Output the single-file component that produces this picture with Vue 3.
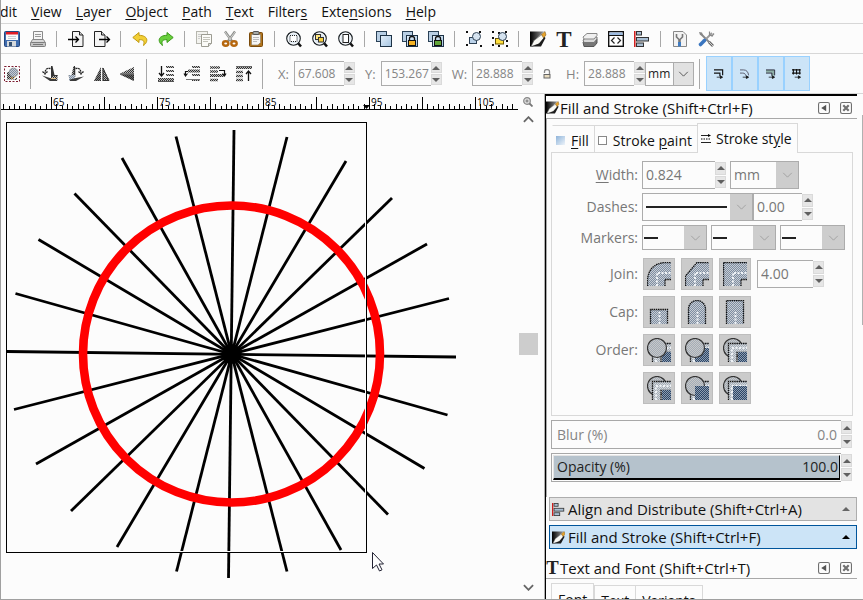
<script setup>
import { h, ref } from 'vue'

const Spin = (props) =>
  h('span', { class: 'spin' }, [
    h('button', { type: 'button', 'aria-label': props.name + ' up' }, [
      h('svg', { viewBox: '0 0 8 4' }, [h('path', { d: 'M0 4L4 0L8 4Z' })]),
    ]),
    h('button', { type: 'button', 'aria-label': props.name + ' down' }, [
      h('svg', { viewBox: '0 0 8 4' }, [h('path', { d: 'M0 0L4 4L8 0Z' })]),
    ]),
  ])
Spin.props = ['name']

const menus = [
  ['', '', 'dit'],
  ['', 'V', 'iew'],
  ['', 'L', 'ayer'],
  ['', 'O', 'bject'],
  ['', 'P', 'ath'],
  ['', 'T', 'ext'],
  ['Filter', 's', ''],
  ['Exte', 'n', 'sions'],
  ['', 'H', 'elp'],
]

const page = (x) =>
  `<path d="M${x + 0.5} .5h7l3.500 3.500v11.500h-10.500z" fill="#f4f4f4" stroke="#222"/><path d="M${x + 7.5} .5v3.500h3.500" fill="#ccc" stroke="#222"/>`
const lens =
  '<path d="M11.500 11.500L15 15.500" stroke="#111" stroke-width="2.500"/><circle cx="7.500" cy="7.500" r="6.700" fill="#dce6ef" stroke="#1c2226" stroke-width="1.300"/><circle cx="7.500" cy="7.500" r="5.500" fill="none" stroke="#fff"/>'
const twoSquares =
  '<rect x=".5" y=".5" width="10" height="10" fill="#b9cfe4" stroke="#2a4156"/><rect x="4.500" y="4.500" width="11" height="11" fill="url(#gBlue)" stroke="#1d3245"/>'
const lock = (c) =>
  `<path d="M7.500 9.500v-2a2.500 2 0 0 1 5 0v2" fill="none" stroke="#111" stroke-width="1.300"/><rect x="6.500" y="9.500" width="7" height="5" fill="${c}" stroke="#111"/>`
const corners =
  '<path d="M0 0h2v2h-2zM13 0h2v2h-2zM0 13h2v2h-2zM14 14h2v2h-2z" fill="#111"/>'
const pen =
  '<path d="M0 .5H14L4 10 2.500 15.500H0z" fill="url(#gInk)"/><path d="M1 15.500L4 9.500 12 3.500l2.500 3L9 13z" fill="#fafaf6" stroke="#555" stroke-width=".6"/><path d="M11.500 3.500L15 .5l1 3.500-2.500 3z" fill="#e8a42c" stroke="#6b4a10" stroke-width=".5"/><path d="M1.500 15.500L9 12.500 14.500 6l1 1L11 15.500z" fill="#1c1c1c"/>'
const barsH = (ys) => ys.map((y) => `<path d="M8 ${y}h8" stroke="url(#dk)" stroke-width="2"/>`).join('')

const icons = {
  save: '<rect x=".5" y=".5" width="15" height="15" rx="1" fill="#3f6cae" stroke="#24477f"/><rect x="2" y="1" width="12" height="8" fill="#fafafa"/><path d="M2 1h12v2.500h-12z" fill="#e01b24"/><path d="M4 5.500h8M4 7.500h8" stroke="#c9ccd0"/><rect x="3" y="10" width="9" height="5.500" fill="#d5d9dc"/><rect x="5" y="11" width="3" height="4" fill="#35506f"/>',
  print: '<path d="M3.500 8.500V.5h9v8" fill="#f6f6f6" stroke="#8a8a8a"/><path d="M5 3.500h6M5 5.500h6" stroke="#999"/><path d="M2.500 8.500h11l2 3.500h-15z" fill="#d8d8d8" stroke="#888"/><rect x=".5" y="11.500" width="15" height="4" rx="1" fill="#c4c4c4" stroke="#7d7d7d"/><path d="M3 13.500h10" stroke="#777"/>',
  import: page(4) + '<path d="M0 8.500h10M7.500 5.500l3 3-3 3" fill="none" stroke="#000" stroke-width="1.300"/>',
  export: page(0) + '<path d="M5 8.500h10M12.500 5.500l3 3-3 3" fill="none" stroke="#000" stroke-width="1.300"/>',
  undo: '<path d="M7 1.500L.8 6.500 7 11.500V8.700c4-.2 6 1 4.500 5.800C16.500 11 16.500 4.500 7 4.300z" fill="#f2cf35" stroke="#c09a12" stroke-linejoin="round"/>',
  redo: '<path d="M9 1.500l6.200 5L9 11.500V8.700c-4-.2-6 1-4.500 5.800C-.5 11-.5 4.500 9 4.300z" fill="#68cf3c" stroke="#3d9a1b" stroke-linejoin="round"/>',
  copy: '<rect x=".5" y=".5" width="11" height="12" fill="#f3f3ef" stroke="#b6b6ae"/><path d="M2 3.500h7M2 5.500h3M2 7.500h2" stroke="#ccc"/><path d="M5.500 3.500h10v9l-3 3h-7z" fill="#fbfbf8" stroke="#9c9c92"/><path d="M7 6.500h7M7 8.500h7M7 10.500h5" stroke="#c3c3ba"/><path d="M12.500 15.500v-3h3" fill="#ddd" stroke="#9c9c92"/>',
  cut: '<path d="M3 .5L10.500 11" stroke="#8b8d8a" stroke-width="2.400"/><path d="M13 .5L5.500 11" stroke="#8b8d8a" stroke-width="2.400"/><path d="M3 1l6 8M13 1l-6 8" stroke="#e6e6e4" stroke-width=".8"/><ellipse cx="3.700" cy="12.500" rx="2.700" ry="2.200" fill="none" stroke="#b5670f" stroke-width="2.400"/><ellipse cx="12" cy="12.500" rx="2.700" ry="2.200" fill="none" stroke="#b5670f" stroke-width="2.400"/>',
  paste: '<rect x="1.500" y="1.500" width="13" height="14" rx="1" fill="#b0741d" stroke="#7a4a0a"/><path d="M3.500 3.500h9v8l-2.500 2.500h-6.500z" fill="#f6f6f4" stroke="#8a7b60" stroke-width=".6"/><path d="M5 6.500h6M5 8.500h6M5 10.500h4" stroke="#bbb"/><rect x="5" y=".5" width="6" height="3" rx="1" fill="#a8aaa5" stroke="#555"/>',
  zoomSel: lens + '<rect x="4" y="4.500" width="7" height="6" fill="#fff" stroke="#222" stroke-dasharray="1 1"/>',
  zoomDraw: lens + '<rect x="3.500" y="3.500" width="5" height="5" fill="#ffe680" stroke="#333"/><rect x="6.500" y="6.500" width="5" height="4.500" fill="#f7cf3d" stroke="#333"/>',
  zoomPage: lens + '<rect x="5" y="3.500" width="5.500" height="8" fill="#fff" stroke="#222"/>',
  dup: twoSquares,
  clone: twoSquares + lock('#f5b324'),
  unclone: twoSquares + lock('#62a63a'),
  group: corners + '<rect x="3.500" y="6.500" width="7" height="6" fill="#bcd3ea" stroke="#2d4053"/><circle cx="10.500" cy="5.500" r="4" fill="#d5e3f0" stroke="#2d4053"/>',
  ungroup: corners + '<path d="M6 1h2v2h-2zM0 6h2v2h-2zM6 14h2v2h-2zM14 9h2v2h-2z" fill="#111"/><rect x="3.500" y="7.500" width="8" height="5.500" fill="#ffdf3e" stroke="#6b5600"/><circle cx="10.500" cy="5.500" r="4" fill="#d5e3f0" stroke="#2d4053"/>',
  fill: pen,
  text: '<text x="8" y="15.500" text-anchor="middle" font-family="Liberation Serif, serif" font-weight="700" font-size="23" fill="#222">T</text>',
  layers: '<path d="M1 11l4-3h10v4l-3 3.500h-10z" fill="#777" stroke="#555"/><path d="M1 9l4-3h10v2l-3 3.500H2z" fill="#d8d8d8" stroke="#777"/><path d="M1 6l4-3.500h10v2L12 8H2z" fill="#f0f0f0" stroke="#888"/>',
  xml: '<rect x=".7" y=".7" width="14.600" height="14.600" fill="#fff" stroke="#111" stroke-width="1.400"/><path d="M1.500 1.500h13v2.500h-13z" fill="#9dbbe0"/><path d="M1 4.500h14" stroke="#111"/><path d="M6.500 6.500l-3 3 3 3M9.500 6.500l3 3-3 3" fill="none" stroke="#222" stroke-width="1.200"/>',
  align: '<path d="M.8 0v16" stroke="#d01616" stroke-width="1.500"/><rect x="2.500" y=".5" width="5" height="3.500" fill="#a9bfd4" stroke="#333"/><rect x="2.500" y="6.500" width="12" height="3.500" fill="#a9bfd4" stroke="#333"/><rect x="2.500" y="12" width="7" height="3.500" fill="#a9bfd4" stroke="#333"/>',
  prefs: '<path d="M1.500.5h9.500l3.500 3.500v11.500h-13z" fill="#f2f2f2" stroke="#888"/><path d="M4.500 3v3l2.500 2.500v4M10.500 3v3L8 8.500v4" fill="none" stroke="#777" stroke-width="1.600"/><path d="M7.500 11v4.500" stroke="#3f7bc0" stroke-width="3"/>',
  tools: '<path d="M3 3l11 11" stroke="#888" stroke-width="2"/><path d="M1 1l3 .5 1 3-3-.5z" fill="#888"/><path d="M14 2L7.500 8.500" stroke="#999" stroke-width="1.800"/><path d="M11.500 .5v3.500l3.500 1M16 2.500l-2.500 3" fill="none" stroke="#888" stroke-width="1.200"/><path d="M6.500 9.500L2.500 13.500" stroke="#3a75bf" stroke-width="3.600" stroke-linecap="round"/><path d="M11 11l4 4" stroke="#666" stroke-width="2.600"/><path d="M11 11l4 4" stroke="#eee" stroke-width=".8"/>',
  selAll: '<rect x=".5" y=".5" width="15" height="15" fill="none" stroke="#7c1c30" stroke-dasharray="2 1.500"/><path d="M3 6h7v7H3z" fill="url(#dk)"/><circle cx="9.500" cy="6.500" r="4.500" fill="url(#bl)" stroke="#888" stroke-width=".6"/><path d="M2 13.500h8l3-2v2.500H2z" fill="url(#dk)"/><path d="M7 12h2M10 11h1" stroke="#d8a040"/>',
  rotL: '<path d="M9 0h1.500l2 9h3.500l-2 3.500H9z" fill="#333"/><path d="M10 10h5.500v5H9z" fill="url(#dk)"/><path d="M8.500 2.500C4.500 1.500 3 4 3 7.500M.5 5.500L3 8l2.500-2.500" fill="none" stroke="#222" stroke-width="1.300" stroke-dasharray="2 .6"/><path d="M0 9.500l8 2.500 6 1.500v1.500H8z" fill="#3a3a3a"/><path d="M9 12.500h5" stroke="#e2c28c"/>',
  rotR: '<path d="M7 0H5.500l-2 9H0l2 3.500h5z" fill="url(#dk)"/><path d="M6.500 1v10" stroke="#333" stroke-width="1.500"/><path d="M1 9h6v6H1z" fill="url(#bl)"/><path d="M7.500 2.500C11.500 1.500 13 4 13 7.500M10.500 5.500L13 8l2.500-2.500" fill="none" stroke="#222" stroke-width="1.300" stroke-dasharray="2 .6"/><path d="M16 10.500L8 12l-6 1.500V15h6z" fill="#3a3a3a"/>',
  flipH: '<path d="M7 1v14H0z" fill="url(#dk)"/><path d="M8.500 1v14H16z" fill="url(#dk)"/><path d="M9 2v12.500h5.500z" fill="none" stroke="#333"/><path d="M7 1v14H0z" fill="#222" opacity=".35"/>',
  flipV: '<path d="M14 1v6.500H0z" fill="url(#dk)"/><path d="M14 8.500V15L0 8.500z" fill="url(#dk)"/><path d="M14 8.500V15L0 8.500z" fill="#222" opacity=".55"/><path d="M0 8h14" stroke="#333"/>',
  bottom: '<path d="M3.500 0v10M1 7l2.500 3L6 7" fill="none" stroke="#111" stroke-width="1.300"/>' + barsH([1, 5, 9]) + '<path d="M0 13.500h16" stroke="url(#dk)" stroke-width="3"/><path d="M0 15.500h16" stroke="#555"/>',
  lower: '<path d="M6 5.500H1.500v4M0 7.500l1.500 2.500 2-2.500" fill="none" stroke="#111" stroke-width="1.200"/>' + barsH([1, 9, 14]) + '<path d="M4 5h12" stroke="url(#dk)" stroke-width="3"/><path d="M2 13.500h14" stroke="#777"/>',
  raise: '<path d="M0 1.500h10M0 5.500h8M0 14h8" stroke="url(#dk)" stroke-width="2.500"/><path d="M0 9.500h14" stroke="url(#dk)" stroke-width="3"/><path d="M9 4.500h5.500v5M12.500 7.500l2 2.500 1.500-2.500" fill="none" stroke="#111" stroke-width="1.200"/>',
  top: '<path d="M0 1.500h16" stroke="url(#dk)" stroke-width="3"/><path d="M0 .5h16" stroke="#666"/><path d="M0 6h7M0 10h7M0 14h7" stroke="url(#dk)" stroke-width="2.500"/><path d="M12.500 15V5.500M10 8l2.500-3L15 8" fill="none" stroke="#111" stroke-width="1.300"/>',
  snap1: '<path d="M0 1h9.500v6M0 4.500h6.500v3.500" fill="none" stroke="#111" stroke-width="1.300"/><path d="M3 9h5M7 7.500L9.500 9 7 10.500z" fill="#111" stroke="#111" stroke-width=".8"/>',
  snap2: '<path d="M0 1h4c3 0 5 2 5.500 6M0 4.500h3c2 0 3 1 3.500 3" fill="none" stroke="#556" stroke-width="1"/><path d="M3 9h5M7 7.500L9.500 9 7 10.500z" fill="#111" stroke="#111" stroke-width=".8"/>',
  snap3: '<path d="M0 1h9v6.500H6v-3.500H0z" fill="#8fb0a8"/><path d="M0 1h9.500v6M0 4.500h6.500v3" fill="none" stroke="#223" stroke-width="1"/><path d="M3 9h5M7 7.500L9.500 9 7 10.500z" fill="#111" stroke="#111" stroke-width=".8"/>',
  snap4: '<path d="M0 1h9.500M0 4.500h9.500" stroke="#111" stroke-width="1.300"/><path d="M1.500 0v6M5 0v6M8.500 0v6" stroke="#111" stroke-width="1.200"/><path d="M3 9h5M7 7.500L9.500 9 7 10.500z" fill="#111" stroke="#111" stroke-width=".8"/>',
}

const commands = [
  ['save', 'print'], ['import', 'export'], ['undo', 'redo'], ['copy', 'cut', 'paste'],
  ['zoomSel', 'zoomDraw', 'zoomPage'], ['dup', 'clone', 'unclone'], ['group', 'ungroup'],
  ['fill', 'text', 'layers', 'xml', 'align'], ['prefs', 'tools'],
]
const transforms = [['selAll'], ['rotL', 'rotR', 'flipH', 'flipV'], ['bottom', 'lower', 'raise', 'top']]
const snaps = ['snap1', 'snap2', 'snap3', 'snap4']

const coords = ref([
  { id: 'X', value: '67.608' },
  { id: 'Y', value: '153.267' },
  { id: 'W', value: '28.888' },
])

// Ruler: one tick per unit, 5.3px apart, a tall one every fifth pair
const ticks = Array.from({ length: 97 }, (_, i) => ({
  x: Math.round(51 + (i - 9) * 5.3) - 0.5,
  top: (i - 9) % 10 === 0 ? 1 : i % 2 ? 10 : 8,
})).filter((t) => t.x > 1 && t.x < 519)
const marks = [65, 75, 85, 95, 105].map((n, i) => ({ n, x: 52 + i * 106 }))

const spokes = [
  [234, 130, 228.5, 578], [287, 137, 176.5, 571.5], [346, 161, 117, 547], [392, 198, 71, 511],
  [427, 244, 36, 464], [449, 298.5, 14, 409.5], [456, 357, 7, 351.5], [447.5, 415, 15.5, 293.5],
  [424.5, 468.5, 38.5, 239.5], [388, 514.5, 74.5, 193.5], [341, 550, 122, 158], [287, 571.5, 176, 136.5],
]

const dots = (d) => `<path d="${d}" fill="none" stroke="#111" stroke-width="1.300" stroke-dasharray="1.500 .7"/>`
const mid = (d) => `<path d="${d}" fill="none" stroke="#eef2f6" stroke-width="2" stroke-dasharray="2 1.500"/>`
const joins = [
  '<path d="M0 24V19Q2 2 18 0H24V17H18V24z" fill="url(#bl)"/>' + dots('M.5 24V19Q1 2 18 .5H24M18 24V17.500H24') + mid('M10 24V11H24'),
  '<path d="M0 24V14L12 0H24V17H18V24z" fill="url(#bl)"/>' + dots('M.5 24V14L12 .5H24M18 24V17.500H24') + mid('M10 24V11H24'),
  '<path d="M0 24V0H24V17H18V24z" fill="url(#bl)"/>' + dots('M.5 24V.5H24M18 24V17.500H24') + mid('M10 24V11H24'),
]
const caps = [
  '<path d="M3 24V10H21V24z" fill="url(#bl)"/>' + dots('M3.500 24V9.500H20.500V24') + mid('M12.500 24V12'),
  '<path d="M3 24V9a9 9 0 0 1 18 0V24z" fill="url(#bl)"/>' + dots('M3.500 24V9a8.500 8.500 0 0 1 17 0V24') + mid('M12.500 24V12'),
  '<path d="M3 24V0H21V24z" fill="url(#bl)"/>' + dots('M3.500 24V.5H20.500V24') + mid('M12.500 24V12'),
]
const disc = '<circle cx="10" cy="10" r="9.500" fill="#c8c8c8"/><circle cx="10" cy="10" r="9.500" fill="url(#lt)" stroke="#333" stroke-width="1.200"/>'
const stroke = '<path d="M5 24V5H24V14H14V24z" fill="#d4d8dc"/><path d="M5 24V5H24V14H14V24z" fill="url(#lt)"/>' + mid('M9 24V10H24') + dots('M5.500 24V5.500H24M14 24V14.500H24')
const body = '<path d="M10 10H24V24H10z" fill="#8d9db0"/><path d="M10 10H24V24H10z" fill="url(#nv)"/>'
const inner = '<path d="M15 14H24V24H15z" fill="#8d9db0"/><path d="M15 14H24V24H15z" fill="url(#nv)"/>'
const orders = [
  [stroke + inner + disc, stroke + body + disc, disc + stroke + inner],
  [disc + stroke + inner, stroke + disc + body, disc + stroke + body],
]
const strokeRows = [
  { label: 'Join:', items: joins, miter: true },
  { label: 'Cap:', items: caps },
  { label: 'Order:', items: orders[0] },
  { label: '', items: orders[1] },
]
const chevron = 'M1 1L6 6L11 1'
</script>

<template>
  <div class="app">
    <svg class="defs" width="0" height="0" aria-hidden="true">
      <defs>
        <linearGradient id="gBlue" x2="1" y2="1"><stop stop-color="#e6f1fb" /><stop offset="1" stop-color="#a3c3e0" /></linearGradient>
        <linearGradient id="gInk" x2="1"><stop stop-color="#000" /><stop offset="1" stop-color="#999" /></linearGradient>
        <linearGradient id="gSky" x2="1" y2="1"><stop stop-color="#8fb4da" /><stop offset="1" stop-color="#eef4fa" /></linearGradient>
        <pattern id="dk" width="2" height="2" patternUnits="userSpaceOnUse"><rect width="2" height="2" fill="#bbb" /><path d="M0 0h1v1h-1zM1 1h1v1h-1z" fill="#333" /></pattern>
        <pattern id="bl" width="2" height="2" patternUnits="userSpaceOnUse"><rect width="2" height="2" fill="#c8cdd4" /><path d="M0 0h1v1h-1zM1 1h1v1h-1z" fill="#7e8ea2" /></pattern>
        <pattern id="lt" width="2" height="2" patternUnits="userSpaceOnUse"><path d="M0 0h1v1h-1zM1 1h1v1h-1z" fill="#a3adb8" /></pattern>
        <pattern id="nv" width="2" height="2" patternUnits="userSpaceOnUse"><path d="M0 0h1v1h-1zM1 1h1v1h-1z" fill="#2c4566" /></pattern>
      </defs>
    </svg>

    <nav class="menubar">
      <a v-for="m in menus" :key="m.join('')" href="#">{{ m[0] }}<u>{{ m[1] }}</u>{{ m[2] }}</a>
    </nav>

    <div class="bar commands">
      <div v-for="(g, i) in commands" :key="i" class="group">
        <button v-for="n in g" :key="n" type="button" :aria-label="n">
          <svg class="ico" viewBox="0 0 16 16" v-html="icons[n]"></svg>
        </button>
      </div>
    </div>

    <div class="bar controls">
      <div v-for="(g, i) in transforms" :key="i" class="group">
        <button v-for="n in g" :key="n" type="button" :aria-label="n">
          <svg class="ico" viewBox="0 0 16 16" v-html="icons[n]"></svg>
        </button>
      </div>
      <div class="fields">
        <div v-for="c in coords" :key="c.id" class="field">
          <label :for="'f' + c.id">{{ c.id }}:</label>
          <span class="entry"><input :id="'f' + c.id" v-model="c.value" type="text" /><Spin :name="c.id" /></span>
        </div>
        <button class="lock" type="button" aria-label="Lock">
          <svg viewBox="0 0 8 10"><path d="M1.500 4V2.500a2.500 2 0 0 1 5 0V5" fill="none" stroke="#888" stroke-width="1.300" /><rect x="1" y="5.500" width="6" height="3.500" fill="#e8dcc0" stroke="#666" /></svg>
        </button>
        <div class="field">
          <label for="fH">H:</label>
          <span class="entry"><input id="fH" type="text" value="28.888" /><Spin name="H" /></span>
          <span class="combo unit">
            <select aria-label="Unit"><option>mm</option></select>
            <span class="arrow"><svg viewBox="0 0 12 7"><path :d="chevron" /></svg></span>
          </span>
        </div>
      </div>
      <div class="snaps">
        <button v-for="s in snaps" :key="s" type="button" :aria-label="s"><svg viewBox="0 0 11 11" v-html="icons[s]"></svg></button>
      </div>
    </div>

    <main class="work">
      <section class="canvas">
        <svg class="ruler">
          <path d="M0 15.500H517" stroke="#000" />
          <path v-for="t in ticks" :key="t.x" :d="`M${t.x} ${t.top + 2}V15`" stroke="#000" />
          <path d="M362 11h7l-3.500 4z" />
          <text v-for="m in marks" :key="m.n" :x="m.x" y="12">{{ m.n }}</text>
        </svg>
        <button class="corner" type="button" aria-label="Zoom to window">
          <svg viewBox="0 0 10 10"><circle cx="4" cy="4" r="3.300" fill="#ddd" stroke="#888" stroke-width="1.200" /><path d="M6.500 6.500L9.500 9.500" stroke="#777" stroke-width="1.800" /><path d="M2.500 4h3M4 2.500v3" stroke="#777" /></svg>
        </button>
        <svg class="drawing">
          <g transform="translate(-1 -110)">
            <g stroke="#000" stroke-width="2.800">
              <line v-for="(s, i) in spokes" :key="i" :x1="s[0]" :y1="s[1]" :x2="s[2]" :y2="s[3]" />
            </g>
            <circle cx="231.500" cy="354" r="10" />
            <circle cx="231.500" cy="354" r="148.500" fill="none" stroke="#f00" stroke-width="8.600" />
            <path d="M365.500 123V551.500H7" fill="none" stroke="#fcfcfc" />
            <rect x="6.500" y="122.500" width="360" height="430" fill="none" stroke="#000" />
            <path d="M372.500 552.500v16l4-3.500 3 6 2.500-1.200-3-5.800h4.500z" fill="#fff" stroke="#223" />
          </g>
        </svg>
        <div class="scroll">
          <svg viewBox="0 0 12 7"><path d="M1 6L6 1L11 6" /></svg>
          <i></i>
          <svg viewBox="0 0 12 7"><path :d="chevron" /></svg>
        </div>
      </section>

      <aside class="dock">
        <header class="title">
          <svg viewBox="0 0 16 16" v-html="icons.fill"></svg>
          <h2>Fill and Stroke (Shift+Ctrl+F)</h2>
          <button type="button" aria-label="Iconify"><svg viewBox="0 0 11 11"><rect x=".5" y=".5" width="10" height="10" rx="1.500" /><path d="M7.500 2.500v6L3 5.500z" fill="#555" stroke="none" /></svg></button>
          <button type="button" aria-label="Close"><svg viewBox="0 0 11 11"><rect x=".5" y=".5" width="10" height="10" rx="1.500" /><path d="M3 3l5 5M8 3L3 8" stroke-width="2" /></svg></button>
        </header>

        <div class="inner">
          <div class="tabs">
            <button type="button"><svg viewBox="0 0 10 10"><rect width="9" height="9" fill="url(#gSky)" /></svg><span><u>F</u>ill</span></button>
            <button type="button"><svg viewBox="0 0 10 10"><rect x=".5" y=".5" width="8" height="8" fill="#fff" stroke="#888" /></svg><span>Stroke <u>p</u>aint</span></button>
            <button type="button" class="on"><svg viewBox="0 0 10 10"><path d="M0 1.500h8M0 8.500h10" stroke="#222" /><path d="M0 5h10" stroke="#555" stroke-width="1.500" stroke-dasharray="1.500 1" /><path d="M7 0l3 1.500-3 1.500z" /></svg><span>Stroke st<u>y</u>le</span></button>
          </div>
          <div class="panel">
            <div class="row">
              <label for="sw"><u>W</u>idth:</label>
              <span class="entry wide"><input id="sw" type="text" value="0.824" /><Spin name="Width" /></span>
              <span class="combo units">
                <select aria-label="Stroke unit"><option>mm</option></select>
                <span class="arrow"><svg viewBox="0 0 12 7"><path :d="chevron" /></svg></span>
              </span>
            </div>
            <div class="row">
              <label for="sd">Dashes:</label>
              <span class="combo dashes">
                <select id="sd"><option></option></select>
                <svg class="line" viewBox="0 0 80 2" preserveAspectRatio="none"><path d="M0 1H80" /></svg>
                <span class="arrow"><svg viewBox="0 0 12 7"><path :d="chevron" /></svg></span>
              </span>
              <span class="entry offset"><input aria-label="Dash offset" type="text" value="0.00" /><Spin name="Offset" /></span>
            </div>
            <div class="row markers">
              <label for="sm1">Markers:</label>
              <span v-for="n in 3" :key="n" class="combo marker">
                <select :id="'sm' + n" :aria-label="'Marker ' + n"><option></option></select>
                <svg class="line short" viewBox="0 0 14 2"><path d="M0 1H14" /></svg>
                <span class="arrow"><svg viewBox="0 0 12 7"><path :d="chevron" /></svg></span>
              </span>
            </div>
            <div v-for="(r, i) in strokeRows" :key="i" class="row shapes">
              <span class="lbl">{{ r.label }}</span>
              <button v-for="(s, j) in r.items" :key="j" type="button" :aria-label="(r.label || 'Order') + ' ' + (j + 1)">
                <svg viewBox="0 0 24 24" v-html="s"></svg>
              </button>
              <span v-if="r.miter" class="entry miter"><input aria-label="Miter limit" type="text" value="4.00" /><Spin name="Miter limit" /></span>
            </div>
          </div>

          <div class="scale">
            <div class="track"><label for="blur">Blur (%)</label><input id="blur" type="text" value="0.0" /></div>
            <Spin name="Blur" />
          </div>
          <div class="scale full">
            <div class="track"><div class="level"><label for="opac">Opacity (%)</label><input id="opac" type="text" value="100.0" /></div></div>
            <Spin name="Opacity" />
          </div>
        </div>

        <div class="switches">
          <button type="button">
            <svg viewBox="0 0 16 16" v-html="icons.align"></svg><span>Align and Distribute (Shift+Ctrl+A)</span>
            <svg class="tri" viewBox="0 0 8 4"><path d="M0 4L4 0L8 4Z" /></svg>
          </button>
          <button type="button" class="on">
            <svg viewBox="0 0 16 16" v-html="icons.fill"></svg><span>Fill and Stroke (Shift+Ctrl+F)</span>
            <svg class="tri" viewBox="0 0 8 4"><path d="M0 4L4 0L8 4Z" /></svg>
          </button>
        </div>

        <header class="title">
          <svg viewBox="0 0 16 16" v-html="icons.text"></svg>
          <h2>Text and Font (Shift+Ctrl+T)</h2>
          <button type="button" aria-label="Iconify"><svg viewBox="0 0 11 11"><rect x=".5" y=".5" width="10" height="10" rx="1.500" /><path d="M7.500 2.500v6L3 5.500z" fill="#555" stroke="none" /></svg></button>
          <button type="button" aria-label="Close"><svg viewBox="0 0 11 11"><rect x=".5" y=".5" width="10" height="10" rx="1.500" /><path d="M3 3l5 5M8 3L3 8" stroke-width="2" /></svg></button>
        </header>
        <div class="tabs second">
          <button type="button" class="on">Font</button>
          <button type="button">Text</button>
          <button type="button">Variants</button>
        </div>
      </aside>
      <div class="edge"></div>
    </main>
  </div>
</template>

<style>
body {
  margin: 0;
}
.spin {
  display: flex;
  flex: none;
  flex-direction: column;
  width: 11px;
  gap: 1px;
}
.spin button {
  display: flex;
  flex: 1;
  align-items: center;
  justify-content: center;
  min-height: 0;
  padding: 0;
  border: 1px solid #dadada;
  background: #e6e6e6;
}
.spin svg {
  width: 8px;
  height: 4px;
  fill: #606060;
}
</style>

<style scoped>
.app {
  display: flex;
  flex-direction: column;
  box-sizing: border-box;
  height: 100vh;
  overflow: hidden;
  border-left: 1px solid #a0a0a0;
  border-bottom: 1px solid #a0a0a0;
  background: #fcfcfc;
  color: #111;
  font: 14px/20px "Open Sans", sans-serif;
}
.defs {
  position: absolute;
}
button,
input,
select {
  box-sizing: border-box;
  margin: 0;
  padding: 0;
  border: 0;
  border-radius: 0;
  background: none;
  color: inherit;
  font: inherit;
}
button {
  display: flex;
  align-items: center;
}
select {
  appearance: none;
}
u {
  text-underline-offset: 2px;
}
.menubar {
  display: flex;
  flex: none;
  gap: 14px;
  height: 23px;
  margin-left: -1px;
  border-bottom: 1px solid #d7d7d7;
  line-height: 24px;
}
.menubar a {
  color: inherit;
  text-decoration: none;
}
.bar {
  display: flex;
  flex: none;
  align-items: center;
  margin-left: -2px;
  border-bottom: 1px solid #d7d7d7;
}
.commands {
  height: 29px;
}
.controls {
  height: 39px;
}
.group {
  display: flex;
  align-items: center;
}
.group button {
  justify-content: center;
  width: 26px;
  height: 26px;
}
.group + .group::before,
.fields::before,
.snaps::before {
  content: "";
  width: 1px;
  height: 16px;
  margin: 0 6px 0 5px;
  background: #a8a8a8;
}
.controls .group + .group::before,
.fields::before,
.snaps::before {
  height: 30px;
}
.ico {
  width: 16px;
  height: 16px;
  overflow: visible;
}
.fields {
  display: flex;
  align-items: center;
  gap: 10px;
  color: #858585;
  font-size: 13px;
}
.fields::before {
  margin-right: 5px;
}
.field {
  display: flex;
  align-items: center;
}
.field label {
  margin-right: 5px;
}
.entry {
  display: flex;
  align-items: center;
  height: 25px;
}
.entry input {
  align-self: stretch;
  width: 51px;
  padding-left: 3px;
  border: 1px solid #acacac;
  border-right: 0;
}
.field .entry input {
  width: 50px;
  font-size: 12px;
}
.entry .spin {
  align-self: stretch;
  margin: 1px 0;
}
.lock svg {
  width: 8px;
  height: 10px;
}
.lock + .field {
  margin-left: 5px;
}
.combo {
  display: grid;
  grid-template-columns: 1fr 20px;
  box-sizing: border-box;
  border: 1px solid #acacac;
}
.combo select {
  grid-area: 1 / 1 / 2 / 3;
  min-width: 0;
  padding-left: 3px;
}
.combo .arrow {
  display: flex;
  grid-area: 1 / 2;
  align-items: center;
  justify-content: center;
  background: #cdcdcd;
  pointer-events: none;
}
.arrow svg {
  width: 11px;
  height: 6px;
  fill: none;
  stroke: #9d9d9d;
}
.unit {
  width: 49px;
  height: 24px;
  color: #222;
  font-size: 12px;
}
.unit select {
  padding-left: 2px;
}
.unit .arrow {
  border-left: 1px solid #acacac;
  background: #e1e1e1;
}
.unit .arrow svg {
  stroke: #444;
}
.snaps {
  display: flex;
  align-items: center;
}
.snaps button {
  justify-content: center;
  width: 26px;
  height: 35px;
  border: 1px solid #99d1ff;
  background: #cce4f7;
}
.snaps svg {
  width: 10px;
  height: 10px;
}
.work {
  display: flex;
  flex: 1;
  min-height: 0;
}
.canvas {
  display: grid;
  flex: 1;
  grid-template: 16px 1fr / 1fr 32px;
  min-width: 0;
  border-right: 1px solid #b0b0b0;
}
.ruler {
  width: 100%;
  height: 16px;
  overflow: visible;
  font-size: 10px;
}
.corner {
  justify-content: center;
}
.corner svg {
  width: 10px;
  height: 10px;
}
.drawing {
  width: 100%;
  height: 100%;
  overflow: hidden;
}
.scroll {
  display: flex;
  flex-direction: column;
  align-items: center;
  justify-content: space-between;
  padding: 6px 0 8px;
}
.scroll svg {
  width: 11px;
  height: 7px;
  fill: none;
  stroke: #666;
  stroke-width: 2;
}
.scroll i {
  width: 19px;
  height: 22px;
  margin-bottom: 20px;
  background: #cdcdcd;
}
.dock {
  display: flex;
  flex: none;
  flex-direction: column;
  box-sizing: border-box;
  width: 317px;
  padding-right: 5px;
  overflow: hidden;
  border-left: 1px solid #000;
}
.edge {
  width: 1px;
  height: 210px;
  margin-top: 21px;
  background: #b0b0b0;
}
.dock > * {
  flex: none;
}
.title {
  display: flex;
  align-items: center;
  gap: 10px;
  height: 21px;
  padding-right: 5px;
  border-bottom: 1px solid #a8a8a8;
  font-size: 15px;
}
.title:first-child {
  padding-top: 1px;
  border-top: 2px solid #000;
}
.title > svg {
  width: 13px;
  height: 13px;
  overflow: visible;
}
.title h2 {
  flex: 1;
  margin: 0 0 0 -9px;
  font: inherit;
}
.title button svg {
  width: 12px;
  height: 12px;
  fill: none;
  stroke: #707070;
}
.inner {
  padding: 4px 4px 15px;
  border-left: 1px solid #a8a8a8;
}
.tabs {
  display: flex;
  align-items: flex-end;
  padding-left: 1px;
}
.tabs button {
  gap: 5px;
  height: 27px;
  padding: 3px 5px 0 3px;
  border: 1px solid #d9d9d9;
  border-width: 1px 0 0 1px;
}
.tabs button:first-child {
  border-left-color: transparent;
}
.tabs .on {
  position: relative;
  height: 30px;
  margin-bottom: -1px;
  padding-bottom: 2px;
  border-right-width: 1px;
  background: #fcfcfc;
}
.tabs svg {
  width: 10px;
  height: 10px;
}
.panel {
  padding: 8px 0 5px;
  border: 1px solid #d9d9d9;
}
.row {
  display: flex;
  align-items: center;
  margin-bottom: 4px;
  color: #777;
}
.row > label,
.row > .lbl {
  width: 86px;
  margin-right: 4px;
  text-align: right;
}
.row .entry,
.row .combo {
  height: 28px;
}
.row .combo {
  grid-template-columns: 1fr 22px;
}
.wide input {
  width: 73px;
}
.units {
  width: 69px;
  margin-left: 4px;
}
.row .dashes {
  width: 111px;
}
.offset input {
  width: 49px;
}
.line {
  grid-area: 1 / 1;
  align-self: center;
  width: 81px;
  height: 2px;
  margin-left: 3px;
  stroke: #222;
  stroke-width: 2;
}
.line.short {
  width: 14px;
  margin-left: 1px;
}
.markers {
  gap: 4px;
  margin-bottom: 8px;
}
.markers > label {
  margin-right: 0;
}
.row .marker {
  width: 65px;
  height: 25px;
}
.shapes {
  gap: 6px;
  margin-bottom: 6px;
}
.shapes > .lbl {
  margin-right: -1px;
}
.shapes > button {
  justify-content: center;
  width: 32px;
  height: 32px;
  border: 1px solid #bdbdbd;
  background: #cbcbcb;
}
.shapes > button svg {
  width: 24px;
  height: 24px;
}
.miter input {
  width: 56px;
}
.scale {
  display: flex;
  height: 29px;
  margin-top: 4px;
  color: #858585;
}
.scale .track {
  display: flex;
  flex: 1;
  align-items: center;
  min-width: 0;
  padding: 0 4px 0 5px;
  border: 1px solid #a8a8a8;
  border-right: 0;
}
.scale label {
  flex: 1;
}
.scale input {
  width: 60px;
  text-align: right;
}
.scale .spin {
  margin: 1px 1px 1px 0;
}
.full {
  color: #222;
}
.full .track {
  padding: 1px;
}
.level {
  display: flex;
  flex: 1;
  align-items: center;
  align-self: stretch;
  padding: 0 1px 0 3px;
  border: 1px solid #e4e4e4;
  border-right-color: #000;
  border-bottom: 2px solid #000;
  background: #b5c2cc;
}
.switches {
  display: flex;
  flex-direction: column;
  gap: 4px;
  padding: 0 0 8px 3px;
  font-size: 15px;
}
.switches button {
  gap: 3px;
  height: 24px;
  padding: 0 6px 0 2px;
  border: 1px solid #adadad;
  background: #e3e3e3;
}
.switches .on {
  border-color: #00559b;
  background: #cce4f7;
}
.switches span {
  flex: 1;
  text-align: left;
}
.switches svg {
  width: 13px;
  height: 13px;
}
.switches .tri {
  width: 8px;
  height: 4px;
  fill: #666;
}
.switches .on .tri {
  fill: #000;
}
.second {
  margin-top: 4px;
  padding-left: 5px;
}
.tabs.second button {
  padding: 3px 6px 0;
}
.tabs.second button:first-child {
  border-left-color: #d9d9d9;
}
.tabs.second button:last-child {
  border-right-width: 1px;
}
</style>
